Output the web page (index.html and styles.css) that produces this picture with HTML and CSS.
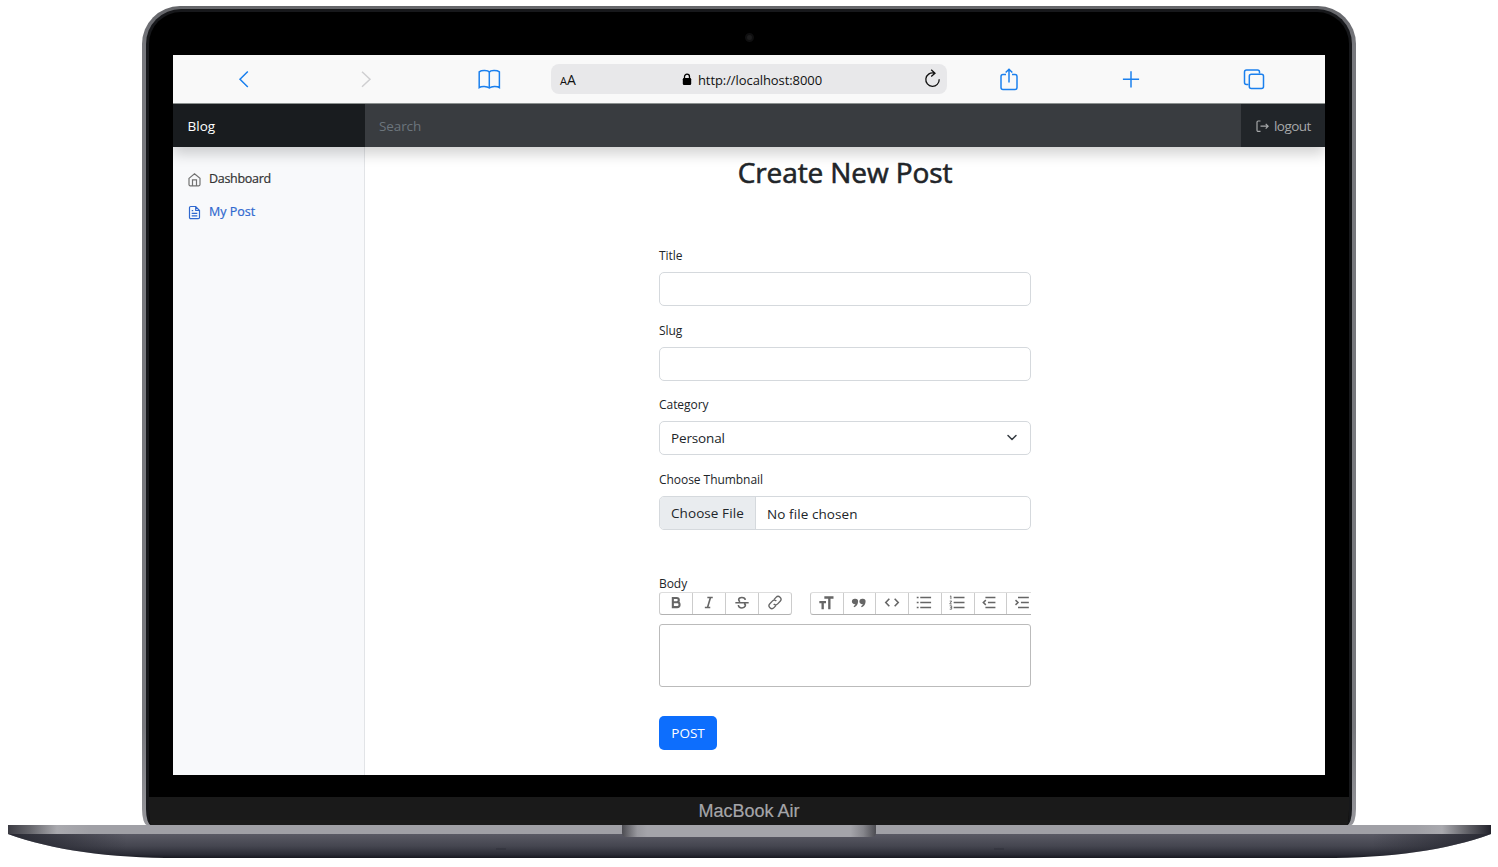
FILE: index.html
```html
<!DOCTYPE html>
<html lang="en">
<head>
<meta charset="utf-8">
<title>Create New Post</title>
<link rel="stylesheet" href="styles.css">
</head>
<body>
<div class="laptop">
  <div class="lid">
    <div class="glass">
      <div class="camera-row"><span class="camera"></span></div>
      <div class="screen">
        <div class="browser">
          <div class="tool"><svg width="26" height="26" viewBox="0 0 26 26"><path d="M16.800 5.500 9 13.200l7.800 7.800"/></svg></div>
          <div class="tool disabled"><svg width="26" height="26" viewBox="0 0 26 26"><path d="m9 5.800 8 7.500-8 7.500"/></svg></div>
          <div class="tool"><svg width="26" height="26" viewBox="0 0 26 26"><path d="M13.300 6.200C12 4 5.500 4 3.200 5.800V21.500C5.500 20 11 20 13.300 22c2.300-2 7.800-2 10.100-.5V5.800C21 4 14.600 4 13.300 6.200zM13.300 6.200V22"/></svg></div>
          <div class="address">
            <span class="aa"><span class="small-a">A</span>A</span>
            <span class="url"><svg width="10" height="13" viewBox="0 0 10 13"><rect x=".8" y="5" width="8.400" height="7" rx="1.200" fill="#000"/><path d="M2.500 6V3.700a2.500 2.500 0 0 1 5 0V6" fill="none" stroke="#000" stroke-width="1.300"/></svg><span class="t-url">http://localhost:8000</span></span>
            <svg class="reload" width="18" height="20" viewBox="0 0 18 20"><path d="M11 4.100A6.700 6.700 0 1 0 16.200 10.300M8.200.8l3.800 3.400-3.800 3.400" fill="none" stroke="#111" stroke-width="1.300"/></svg>
          </div>
          <div class="tool"><svg width="26" height="26" viewBox="0 0 26 26"><path d="M10 8.500H7A2 2 0 0 0 5 10.500V21.500a2 2 0 0 0 2 2H19a2 2 0 0 0 2-2V10.500a2 2 0 0 0-2-2H16M13 16.500V3.500M9.700 6.500 13 3.200l3.300 3.300"/></svg></div>
          <div class="tool"><svg width="26" height="26" viewBox="0 0 26 26"><path d="M13 5.200v16.200M4.900 13.300h16.200"/></svg></div>
          <div class="tool"><svg width="26" height="26" viewBox="0 0 26 26"><path d="M8.500 18.500H6.500a2 2 0 0 1-2-2V6a2 2 0 0 1 2-2h11a2 2 0 0 1 2 2v1.500"/><rect x="9.300" y="8.300" width="14.200" height="14.200" rx="2"/></svg></div>
        </div>
        <header class="navbar">
          <div class="brand">Blog</div>
          <div class="search">Search</div>
          <div class="logout"><svg width="14" height="14" viewBox="0 0 14 14"><path d="M5.500 2H3.200A1.200 1.200 0 0 0 2 3.200v8A1.200 1.200 0 0 0 3.200 12.400h2.300M5.500 7.200h7.500M10.700 4.800l2.400 2.400-2.400 2.400" fill="none" stroke="currentColor" stroke-width="1.200"/></svg><span>logout</span></div>
        </header>
        <div class="page">
          <nav class="sidebar">
            <a class="link"><svg width="15" height="15" viewBox="0 0 15 15"><path d="M2 6.400 7.500 1.800l5.500 4.600v6.200a1.200 1.200 0 0 1-1.200 1.200H3.200A1.200 1.200 0 0 1 2 12.600zM5.500 13.800V7.800h4v6"/></svg><span>Dashboard</span></a>
            <a class="link active"><svg width="15" height="15" viewBox="0 0 15 15"><path d="M8.700 1.500H3.700A1.200 1.200 0 0 0 2.500 2.700v9.700a1.200 1.200 0 0 0 1.200 1.200h7.600a1.200 1.200 0 0 0 1.200-1.200V5.500zM8.700 1.500v4h3.800M4.700 5.700h1.500M4.700 8.300h5.600M4.700 10.900h5.600"/></svg><span>My Post</span></a>
          </nav>
          <main class="content">
            <h1>Create New Post</h1>
            <form class="form">
              <div class="field"><label>Title</label><div class="control"></div></div>
              <div class="field"><label>Slug</label><div class="control"></div></div>
              <div class="field"><label>Category</label><div class="control select"><span>Personal</span><svg width="12" height="12" viewBox="0 0 12 12"><path d="m2 3.500 4 4 4-4" fill="none" stroke="#343a40" stroke-width="1.500" stroke-linecap="round" stroke-linejoin="round"/></svg></div></div>
              <div class="field"><label>Choose Thumbnail</label><div class="control file"><span class="file-button">Choose File</span><span class="file-name">No file chosen</span></div></div>
              <label class="body-label">Body</label>
              <div class="toolbar">
                <div class="group">
                  <i><svg viewBox="0 0 18 18"><path d="M5.200 3.500h4.600a2.500 2.500 0 0 1 0 5.200H5.200zM5.200 8.700h5.200a2.900 2.900 0 0 1 0 5.800H5.200z" stroke-width="2.500"/></svg></i>
                  <i><svg viewBox="0 0 18 18"><path d="M7 3h6.500M4 15H10.500M10.800 3 7.200 15" stroke-width="1.900"/></svg></i>
                  <i><svg viewBox="0 0 18 18"><path d="M13 5.800C12.500 2 5 2.100 5 5.800c0 1 .6 1.700 1.700 2.200M1 9.200h16M11.500 10.200c3 1.600 1.300 5.300-2.500 5.300-2.700 0-4.300-1.500-4.300-3.500" stroke-width="1.900"/></svg></i>
                  <i><svg viewBox="0 0 18 18"><path d="m7.700 5.500 2.500-2.700a3.300 3.300 0 0 1 5 4.700l-3 3.200a3.300 3.300 0 0 1-4.800.1M10.300 12.500l-2.500 2.700a3.300 3.300 0 0 1-5-4.700l3-3.200a3.300 3.300 0 0 1 4.800-.1" stroke-width="1.600"/></svg></i>
                </div>
                <div class="group blocks">
                  <i><svg viewBox="0 0 18 18"><path d="M7 3h11M13 3v14M1 8.500h8M5 8.500v8.500" stroke-width="2.800"/></svg></i>
                  <i><svg viewBox="0 0 18 18"><path d="M4.500 4.500a3.300 3.300 0 1 0 .1 6.400c-.3 1.200-1 2-2.200 2.700l1 1.200c2.800-1.300 4.500-4 4.500-6.900a3.300 3.300 0 0 0-3.400-3.400zM13.500 4.500a3.300 3.300 0 1 0 .1 6.400c-.3 1.200-1 2-2.200 2.700l1 1.200c2.800-1.300 4.500-4 4.500-6.900a3.300 3.300 0 0 0-3.400-3.400z" fill="#666" stroke="none"/></svg></i>
                  <i><svg viewBox="0 0 18 18"><path d="M5.800 4.500 1.500 9l4.300 4.500M12.200 4.500l4.300 4.500-4.300 4.500" stroke-width="1.900"/></svg></i>
                  <i><svg viewBox="0 0 18 18"><path d="M4.500 3h13M4.500 9h13M4.500 15h13M.3 3h2.200M.3 9h2.200M.3 15h2.200" stroke-width="1.800"/></svg></i>
                  <i><svg viewBox="0 0 18 18"><path d="M5 3h13M5 9h13M5 15h13" stroke-width="1.800"/><path d="M.5 2 1.700 1v4M.3 7.300h2.300L.3 10.700h2.400M.3 13h2.300v4H.3M1 15h1.500" stroke-width="1.100"/></svg></i>
                  <i><svg viewBox="0 0 18 18"><path d="M3.500 3h12M6.500 9h9M3.500 15h12M4 6.200 1 9l3 2.800" stroke-width="1.800"/></svg></i>
                  <i><svg viewBox="0 0 18 18"><path d="M3 3h13M6.500 9H16M3 15h13M0 6.200 3 9l-3 2.800" stroke-width="1.800"/></svg></i>
                </div>
              </div>
              <div class="editor"></div>
              <div class="post">POST</div>
            </form>
          </main>
        </div>
      </div>
      <div class="chin"><span>MacBook Air</span></div>
    </div>
  </div>
  <svg class="base" width="1484" height="34" viewBox="0 0 1484 34">
    <defs>
      <linearGradient id="deck"><stop offset="0" stop-color="#3b3b43"/><stop offset=".015" stop-color="#66666c"/><stop offset=".033" stop-color="#a9a9ae"/><stop offset=".055" stop-color="#a0a0a6"/><stop offset=".95" stop-color="#a0a0a6"/><stop offset=".967" stop-color="#a9a9ae"/><stop offset=".983" stop-color="#66666c"/><stop offset="1" stop-color="#22222b"/></linearGradient>
      <linearGradient id="under" x2="0" y2="1"><stop offset="0" stop-color="#5a5a65"/><stop offset=".5" stop-color="#454650"/><stop offset=".85" stop-color="#2b2c36"/><stop offset="1" stop-color="#171820"/></linearGradient>
      <linearGradient id="edge"><stop offset="0" stop-color="#20212a" stop-opacity=".85"/><stop offset=".08" stop-color="#20212a" stop-opacity="0"/><stop offset=".92" stop-color="#20212a" stop-opacity="0"/><stop offset="1" stop-color="#20212a" stop-opacity=".85"/></linearGradient>
      <linearGradient id="notch"><stop offset="0" stop-color="#4c4c52"/><stop offset=".06" stop-color="#98989e"/><stop offset=".1" stop-color="#a4a4aa"/><stop offset=".9" stop-color="#a4a4aa"/><stop offset=".95" stop-color="#85858b"/><stop offset="1" stop-color="#4c4c52"/></linearGradient>
    </defs>
    <path d="M0 9C45 25 100 33 170 33H1314C1384 33 1439 25 1483 9z" fill="url(#under)"/>
    <path d="M0 9C45 25 100 33 170 33H1314C1384 33 1439 25 1483 9z" fill="url(#edge)"/>
    <path d="M0 0h1483v9H0z" fill="url(#deck)"/>
    <path d="M614 0h254v8q0 4-5 4H619q-5 0-5-4z" fill="url(#notch)"/>
    <path d="M488 24h10M986 24h10" stroke="#292a34" stroke-width="2" opacity=".35"/>
  </svg>
</div>
</body>
</html>
```
FILE: styles.css
```css
* { box-sizing: border-box; }
body { margin: 0; width: 1498px; height: 867px; overflow: hidden; background: #fff; font-family: "Open Sans", "Noto Sans", sans-serif; color: #212529; }
svg { display: block; flex: none; }

/* Laptop frame */
.laptop { display: flex; flex-direction: column; align-items: center; padding-top: 6px; }
.lid { width: 1214px; height: 819px; padding: 3px 4px 0; border-radius: 38px 38px 5px 5px / 38px 38px 16px 16px; background: linear-gradient(#646569, #77787d 40px, #77787d 88%, #96969b); }
.glass { height: 816px; padding: 0 24px; border: solid #17181b; border-width: 3px 3px 0; border-radius: 35px 35px 5px 5px / 35px 35px 16px 16px; background: #000; display: flex; flex-direction: column; overflow: hidden; }
.camera-row { height: 43px; display: flex; justify-content: center; padding-top: 21px; }
.camera { width: 9px; height: 9px; border-radius: 50%; background: #1d1d1e; border: 2px solid #0f0f10; }
.screen { width: 1152px; height: 720px; background: #fff; display: flex; flex-direction: column; }
.chin { margin: 22px -24px 0; height: 28px; background: #1a1a1a; display: flex; justify-content: center; }
.chin span { font: 18px/29px "Liberation Sans", sans-serif; color: #a5a5a9; -webkit-text-stroke: .2px #a5a5a9; }
.base { margin-left: 1px; }

/* Browser bar */
.browser { height: 48px; background: #f9f9f9; display: flex; align-items: center; }
.tool { flex: 0 0 122px; display: flex; justify-content: center; fill: none; stroke: #1b80ee; stroke-width: 1.500; }
.tool:first-child { margin-left: 10px; }
.tool:nth-child(3) { margin-left: 1px; }
.disabled { stroke: #cfcfd1; }
.address { width: 396px; height: 30px; border-radius: 8px; background: #e8e8ea; margin: 0 1px; display: flex; align-items: center; justify-content: space-between; padding: 0 6px 0 9px; color: #111; }
.aa { font-size: 14px; width: 30px; padding-top: 1px; }
.small-a { font-size: 11px; }
.url { display: flex; align-items: center; gap: 6px; font-size: 13px; margin-right: 9px; padding-top: 1px; }
.t-url { letter-spacing: -.08px; }

/* Site header */
.navbar { height: 44px; display: flex; background: #212529; font-size: 13.500px; line-height: 44px; box-shadow: 0 7px 14px rgba(0,0,0,.18); position: relative; border-top: 1px solid #8b908f; clip-path: inset(0 0 -30px 0); }
.brand { width: 192px; padding-left: 14.500px; background: #191c1f; color: #fff; }
.search { width: 876px; padding-left: 14px; background: #393c40; color: #6c757d; letter-spacing: -.1px; }
.logout { width: 84px; padding-left: 14px; display: flex; align-items: center; gap: 5px; color: #a6a8a9; letter-spacing: -.55px; }
.logout span { padding-top: 1px; }

.page { flex: 1; display: flex; }
.sidebar { width: 192px; background: #f8f9fb; border-right: 1px solid #e2e4e7; padding: 15px 0 0 14px; display: flex; flex-direction: column; }
.link { height: 33px; display: flex; align-items: center; gap: 7px; font-size: 12.500px; color: #333; letter-spacing: -.3px; -webkit-text-stroke: .2px currentColor; }
.link svg { fill: none; stroke: #727272; stroke-width: 1.200; margin-top: 2px; }
.active { color: #2f68cf; letter-spacing: 0; }
.active svg { stroke: #2f68cf; }

/* Post form */
.content { width: 960px; display: flex; flex-direction: column; align-items: center; padding-top: 6px; }
h1 { margin: 0; font-size: 28px; line-height: 38px; font-weight: 400; letter-spacing: -.1px; white-space: nowrap; -webkit-text-stroke: .6px #212529; }
.form { width: 372px; margin-top: 55px; }
.field { display: flex; flex-direction: column; gap: 6px; margin-bottom: 14.700px; }
label { display: block; width: max-content; font-size: 12px; line-height: 20px; letter-spacing: -.05px; }
.control { height: 34px; border: 1px solid #d5d9dd; border-radius: 5px; display: flex; align-items: center; font-size: 13.500px; overflow: hidden; }
.select { justify-content: space-between; padding: 0 12px 0 11px; letter-spacing: -.15px; }
.file-button { width: 96px; height: 32px; line-height: 33px; padding-left: 11px; background: #e9ecef; border-right: 1px solid #d5d9dd; white-space: nowrap; letter-spacing: .08px; }
.file-name { margin-left: 11px; line-height: 34px; letter-spacing: .08px; padding-top: 1px; }
.body-label { margin-top: 43.500px; }
.toolbar { height: 23px; margin-top: -2px; display: flex; gap: 17px; overflow: hidden; }
.group { flex: none; height: 23px; display: flex; border: 1px solid #ccc; border-top-color: #ddd; border-bottom-color: #b2b2b2; border-radius: 3px; }
.group i { width: 33px; display: flex; align-items: center; justify-content: center; border-left: 1px solid #ccc; padding: 0 1px 1px 0; }
.group i:first-child { border-left: 0; width: 32px; }
.blocks { margin-left: .5px; }
.blocks i { width: 32.750px; }
.group svg { width: 16px; height: 15px; fill: none; stroke: #666; }
.editor { height: 63px; margin-top: 9px; border: 1px solid #bbb; border-radius: 3px; }
.post { width: 58px; height: 34px; margin-top: 29px; border-radius: 5px; background: #0d6efd; color: #fff; font-size: 13.500px; line-height: 34px; text-align: center; }
```
